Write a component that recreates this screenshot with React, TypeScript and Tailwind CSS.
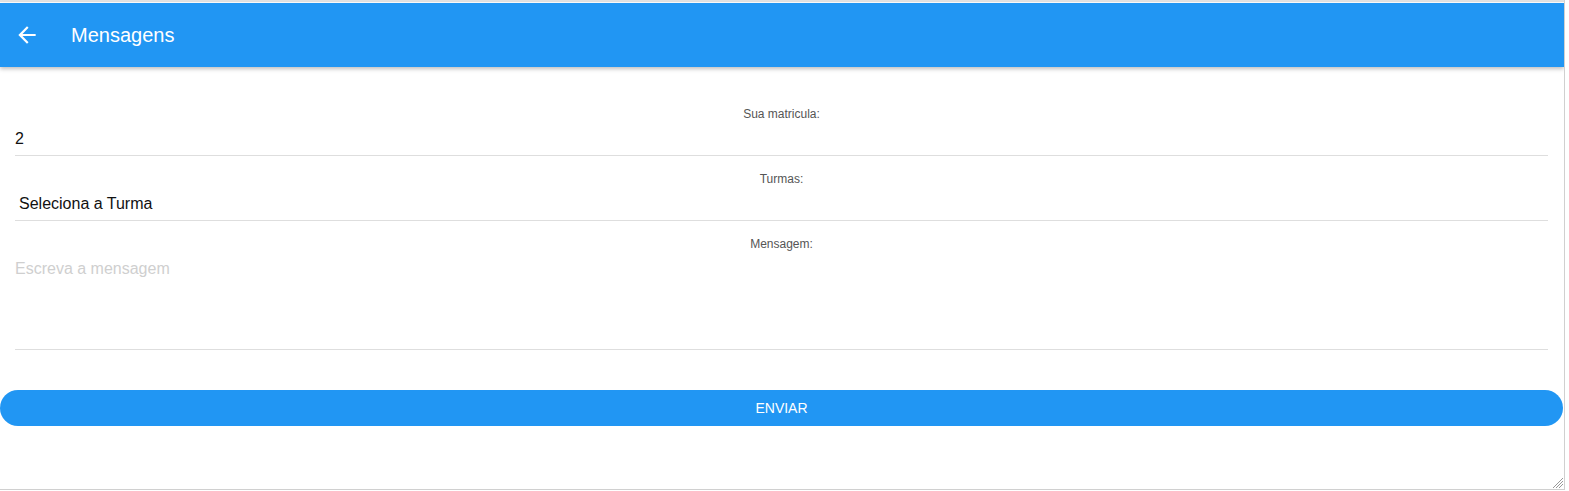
import React from "react";

export default function App() {
  return (
    <div className="w-[1569px] h-[491px] bg-white" style={{ fontFamily: '"Liberation Sans", Arial, sans-serif' }}>
      <div className="relative w-[1565px] h-[490px] border-r border-b border-[#d0d0d0] bg-white overflow-hidden flex flex-col">
        <div className="h-[3px] border-t-2 border-[#e2e2e2] bg-white shrink-0" />
        <header className="relative z-10 h-[64px] shrink-0 bg-[#2196f3] flex items-center shadow-[0_2px_4px_rgba(0,0,0,0.25)]">
          <svg className="ml-[14px] w-[26px] h-[26px]" viewBox="0 0 24 24" fill="white">
            <path d="M20 11H7.83l5.59-5.59L12 4l-8 8 8 8 1.41-1.41L7.83 13H20v-2z" />
          </svg>
          <span className="ml-[31px] text-[20px] text-white leading-none">Mensagens</span>
        </header>
        <main className="pt-[24px] flex flex-col">
          <div className="pl-[15px] pr-[16px]">
            <div className="pt-[15px] border-b border-[#dedede]">
              <div className="h-[16px] text-[12px] leading-[16px] text-[#555] text-center">Sua matricula:</div>
              <div className="h-[33px] flex items-center text-[16px] text-[#111]">2</div>
            </div>
            <div className="pt-[15px] border-b border-[#dedede]">
              <div className="h-[16px] text-[12px] leading-[16px] text-[#555] text-center">Turmas:</div>
              <div className="h-[33px] flex items-center pl-[4px] text-[16px] text-[#111]">Seleciona a Turma</div>
            </div>
            <div className="pt-[15px] border-b border-[#dedede]">
              <div className="h-[16px] text-[12px] leading-[16px] text-[#555] text-center">Mensagem:</div>
              <div className="h-[97px] pt-[5px] text-[16px] leading-[24px] text-[#cfcfcf]">Escreva a mensagem</div>
            </div>
          </div>
          <div className="mt-[40px] pr-[1px]">
            <button className="w-full h-[36px] rounded-full bg-[#2196f3] text-white text-[14px] flex items-center justify-center">
              ENVIAR
            </button>
          </div>
        </main>
        <svg className="absolute right-[1px] bottom-[1px] w-[12px] h-[12px]" viewBox="0 0 12 12" stroke="#999" strokeWidth="1">
          <line x1="12" y1="2" x2="2" y2="12" />
          <line x1="12" y1="5" x2="5" y2="12" />
          <line x1="12" y1="8" x2="8" y2="12" />
        </svg>
      </div>
    </div>
  );
}
